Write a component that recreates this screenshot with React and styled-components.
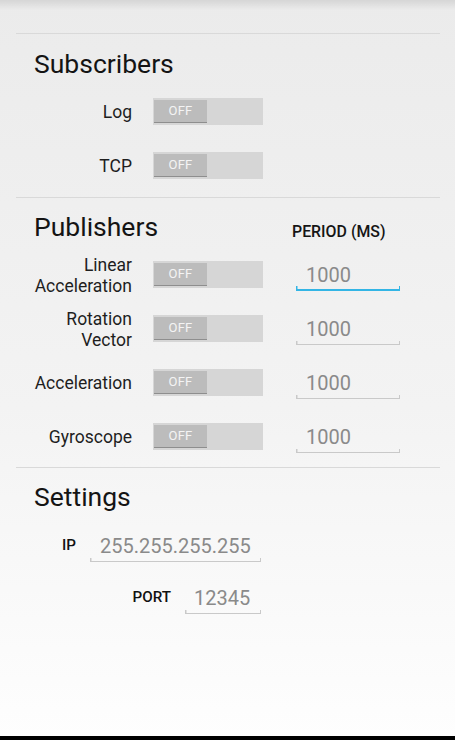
import styled, { createGlobalStyle } from "styled-components";

const GlobalStyle = createGlobalStyle`
    html, body {
        margin: 0;
        padding: 0;
    }
    body {
        font-family: Roboto, "Noto Sans", "Liberation Sans", sans-serif;
        color: #1c1c1c;
    }
`;

const subscribers = ["Log", "TCP"];

const publishers = [
    { label: ["Linear", "Acceleration"], period: "1000", focused: true },
    { label: ["Rotation", "Vector"], period: "1000" },
    { label: ["Acceleration"], period: "1000" },
    { label: ["Gyroscope"], period: "1000" },
];

const Toggle = () => (
    <Track>
        <Thumb>OFF</Thumb>
    </Track>
);

const App = () => {
    return (
        <>
        <GlobalStyle />
        <Screen>
            <Content>
                <Section>
                    <Heading>Subscribers</Heading>
                    <Rows>
                        {subscribers.map((name) => (
                            <Row key={name}>
                                <Label>{name}</Label>
                                <Toggle />
                            </Row>
                        ))}
                    </Rows>
                </Section>

                <Section $top={15} $bottom={17}>
                    <HeadRow>
                        <Heading>Publishers</Heading>
                        <ColumnTitle>PERIOD (MS)</ColumnTitle>
                    </HeadRow>
                    <Rows>
                        {publishers.map((p) => (
                            <Row key={p.label.join(" ")}>
                                <Label>
                                    {p.label.map((line) => (
                                        <span key={line}>{line}</span>
                                    ))}
                                </Label>
                                <Toggle />
                                <Field
                                    $focused={p.focused}
                                    defaultValue={p.period}
                                    readOnly
                                />
                            </Row>
                        ))}
                    </Rows>
                </Section>

                <Section $top={15} $bottom={0}>
                    <Heading>Settings</Heading>
                    <SettingsRows>
                        <SettingRow>
                            <SmallLabel>IP</SmallLabel>
                            <Field $width={171} defaultValue="255.255.255.255" readOnly />
                        </SettingRow>
                        <SettingRow>
                            <SmallLabel>PORT</SmallLabel>
                            <Field $width={76} $indent={9} defaultValue="12345" readOnly />
                        </SettingRow>
                    </SettingsRows>
                </Section>
            </Content>
            <BottomBar />
        </Screen>
        </>
    )
};

const Screen = styled.div`
    display: flex;
    flex-direction: column;
    height: 740px;
    background:
        linear-gradient(to bottom, rgba(0, 0, 0, 0.09), rgba(0, 0, 0, 0) 10px),
        linear-gradient(to bottom, #ebebeb, #f3f3f3 55%, #fefefe);
`

const Content = styled.div`
    flex: 1;
    padding: 33px 15px 0 16px;
`

const Section = styled.section`
    border-top: 1px solid #d9d9d9;
    padding: ${(p) => p.$top ?? 16}px 0 ${(p) => p.$bottom ?? 18}px 18px;
`

const Heading = styled.h2`
    margin: 0;
    font-size: 26.5px;
    font-weight: 400;
    line-height: 28px;
    color: #141414;
    white-space: nowrap;
`

const HeadRow = styled.div`
    display: grid;
    grid-template-columns: 98px 110px 104px;
    grid-template-rows: 28px;
    column-gap: 21px;
    align-items: center;

    & > h2 {
        grid-column: 1 / 3;
    }
`

const ColumnTitle = styled.div`
    margin: 10px 0 0 8px;
    font-size: 15.9px;
    font-weight: 500;
    line-height: 20px;
    color: #151515;
    white-space: nowrap;
`

const Rows = styled.div`
    display: flex;
    flex-direction: column;
    gap: 26px;
    margin-top: 19px;
`

const Row = styled.div`
    display: grid;
    grid-template-columns: 98px 110px 104px;
    grid-template-rows: 28px;
    column-gap: 21px;
    align-items: center;

    & > input {
        margin-left: 12px;
    }
`

const Label = styled.div`
    display: flex;
    flex-direction: column;
    align-items: flex-end;
    padding-top: 3px;
    font-size: 17.5px;
    line-height: 20.5px;
    color: #1e1e1e;
    white-space: nowrap;
`

const Track = styled.div`
    display: flex;
    align-items: flex-start;
    box-sizing: border-box;
    width: 110px;
    height: 27px;
    padding: 2px 1px;
    background: #d6d6d6;
`

const Thumb = styled.div`
    display: flex;
    align-items: center;
    justify-content: center;
    box-sizing: border-box;
    width: 53px;
    height: 23px;
    background: #bcbcbc;
    border-bottom: 1px solid #8e8e8e;
    color: #f4f4f4;
    font-size: 13px;
    letter-spacing: 0.2px;
`

const Field = styled.input`
    box-sizing: border-box;
    width: ${(p) => p.$width ?? 104}px;
    height: 34px;
    padding: 3px 0 ${(p) => (p.$focused ? 2 : 1)}px ${(p) => p.$indent ?? 10}px;
    border: none;
    outline: none;
    font-family: inherit;
    font-size: 20px;
    color: #8a8a8a;
    background:
        linear-gradient(${(p) => (p.$focused ? "#33b5e5" : "#c9c9c9")}, ${(p) => (p.$focused ? "#33b5e5" : "#c9c9c9")}) left bottom / 1.5px ${(p) => (p.$focused ? 5 : 4)}px no-repeat,
        linear-gradient(${(p) => (p.$focused ? "#33b5e5" : "#c9c9c9")}, ${(p) => (p.$focused ? "#33b5e5" : "#c9c9c9")}) right bottom / 1.5px ${(p) => (p.$focused ? 5 : 4)}px no-repeat,
        linear-gradient(${(p) => (p.$focused ? "#33b5e5" : "#c9c9c9")}, ${(p) => (p.$focused ? "#33b5e5" : "#c9c9c9")}) left bottom / 100% ${(p) => (p.$focused ? 2 : 1)}px no-repeat;
`

const SettingsRows = styled.div`
    display: flex;
    flex-direction: column;
    gap: 18px;
    width: 227px;
    margin-top: 17px;
`

const SettingRow = styled.div`
    display: flex;
    justify-content: flex-end;
    align-items: center;
    gap: 14px;
    height: 34px;
`

const SmallLabel = styled.span`
    font-size: 15.2px;
    font-weight: 500;
    color: #111;
`

const BottomBar = styled.div`
    height: 4px;
    background: #000;
`

export default App;
